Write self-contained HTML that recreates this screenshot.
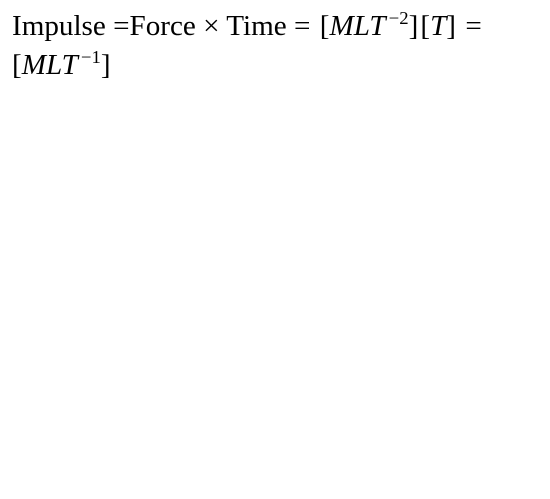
<!DOCTYPE html>
<html><head><style>
body{margin:0;background:#fff;width:550px;height:499px;overflow:hidden}
.t{position:absolute;left:12px;font-family:"Liberation Serif",serif;font-size:28px;color:#000;white-space:nowrap;line-height:1;transform-origin:0 0;transform:scaleX(1.04)}
i{font-style:italic}
sup{font-size:18px;vertical-align:0;position:relative;top:-11px;margin-left:3px}
.m{margin-left:2px}
</style></head><body>
<div class="t" style="top:13px">Impulse =Force × Time = <span class="m"></span>[<i>MLT</i><sup>−2</sup>]<span class="m"></span>[<i>T</i>] <span class="m"></span>=</div>
<div class="t" style="top:52px">[<i>MLT</i><sup>−1</sup>]</div>
</body></html>
